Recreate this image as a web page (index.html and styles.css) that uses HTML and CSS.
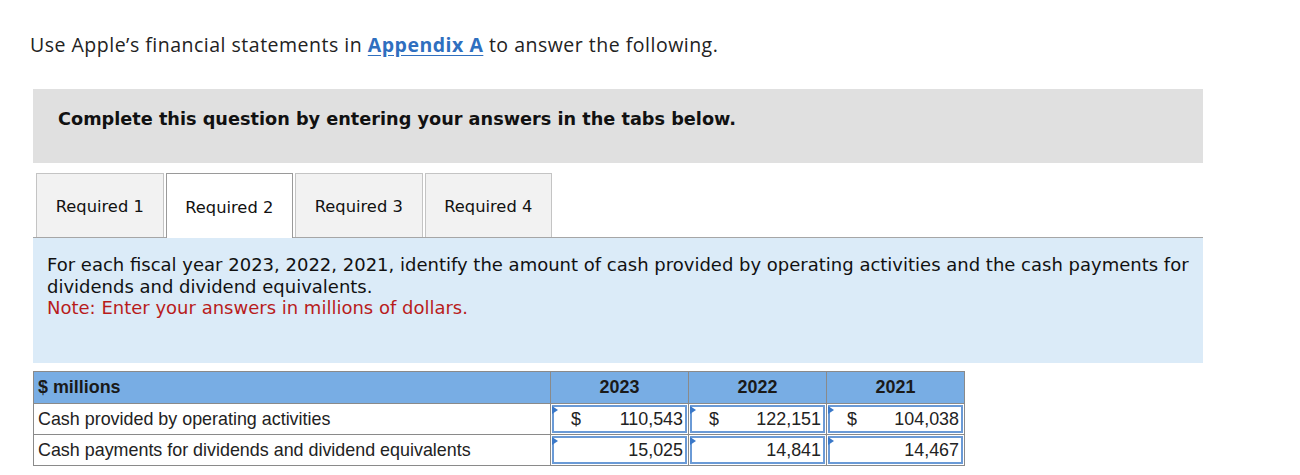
FILE: index.html
```html
<!DOCTYPE html>
<html>
<head>
<meta charset="utf-8">
<link rel="stylesheet" href="styles.css">
</head>
<body>
<div class="page">
  <p class="intro">Use Apple’s financial statements in <a class="link" href="#">Appendix A</a> to answer the following.</p>
  <div class="instruct">Complete this question by entering your answers in the tabs below.</div>
  <div class="tabs">
    <div class="tab">Required 1</div>
    <div class="tab active">Required 2</div>
    <div class="tab">Required 3</div>
    <div class="tab">Required 4</div>
  </div>
  <div class="panel">
    <p class="q">For each fiscal year 2023, 2022, 2021, identify the amount of cash provided by operating activities and the cash payments for dividends and dividend equivalents.</p>
    <p class="note">Note: Enter your answers in millions of dollars.</p>
  </div>
  <table class="grid">
    <thead>
      <tr>
        <th class="lab">$ millions</th>
        <th>2023</th>
        <th>2022</th>
        <th>2021</th>
      </tr>
    </thead>
    <tbody>
      <tr>
        <td class="lab">Cash provided by operating activities</td>
        <td class="in"><div class="box"><span class="cur">$</span><span class="num">110,543</span></div></td>
        <td class="in"><div class="box"><span class="cur">$</span><span class="num">122,151</span></div></td>
        <td class="in"><div class="box"><span class="cur">$</span><span class="num">104,038</span></div></td>
      </tr>
      <tr>
        <td class="lab">Cash payments for dividends and dividend equivalents</td>
        <td class="in"><div class="box"><span class="cur"></span><span class="num">15,025</span></div></td>
        <td class="in"><div class="box"><span class="cur"></span><span class="num">14,841</span></div></td>
        <td class="in"><div class="box"><span class="cur"></span><span class="num">14,467</span></div></td>
      </tr>
    </tbody>
  </table>
</div>
</body>
</html>
```
FILE: styles.css
```css
html, body {
  margin: 0;
  padding: 0;
  background: #fff;
}
.page {
  padding: 0 0 0 33px;
  width: 1170px;
}
.intro {
  margin: 0 0 0 -3px;
  padding: 33px 0 0 0;
  font-family: "Open Sans", sans-serif;
  font-size: 19.5px;
  letter-spacing: 0.5px;
  line-height: 24px;
  color: #222;
}
.link {
  color: #2f6fbf;
  font-weight: 700;
  text-decoration: underline;
  text-underline-offset: 3px;
}
.instruct {
  margin-top: 32px;
  height: 74px;
  background: #e0e0e0;
  box-sizing: border-box;
  padding: 19px 0 0 25px;
  font-family: "DejaVu Sans", Verdana, sans-serif;
  font-weight: 700;
  font-size: 17.7px;
  line-height: 22px;
  color: #111;
}
.tabs {
  display: flex;
  gap: 2px;
  margin-top: 10px;
  padding-left: 3px;
  height: 64px;
  position: relative;
  z-index: 1;
}
.tab {
  width: 127.5px;
  height: 64px;
  box-sizing: border-box;
  border: 1px solid #c4c4c4;
  border-bottom: none;
  background: #f2f2f2;
  display: flex;
  align-items: center;
  justify-content: center;
  font-family: "DejaVu Sans", Verdana, sans-serif;
  font-size: 16.3px;
  color: #111;
  padding-top: 2px;
}
.tab.active {
  background: #fff;
  border-color: #9a9a9a;
  height: 65px;
}
.panel {
  background: #dbebf8;
  border-top: 1px solid #a6a6a6;
  height: 125px;
  box-sizing: content-box;
  padding: 0 8px 0 14px;
  font-family: "DejaVu Sans", Verdana, sans-serif;
  font-size: 18px;
  line-height: 21.5px;
  color: #111;
}
.q {
  margin: 0;
  padding-top: 16px;
}
.note {
  margin: 0;
  color: #b81c1c;
}
.grid {
  margin-top: 8px;
  border-collapse: collapse;
  font-family: "Liberation Sans", Arial, sans-serif;
  font-size: 17.9px;
  color: #222;
}
.grid th, .grid td {
  border: 1px solid #8a8a8a;
  padding: 0;
}
.grid th {
  background: #78ade4;
  height: 31px;
  width: 137px;
  font-weight: 700;
  text-align: center;
  color: #1a1a1a;
}
.grid th.lab {
  width: 512px;
  text-align: left;
  padding-left: 4px;
}
.grid td.lab {
  height: 30px;
  padding-left: 4px;
}
.grid td.in {
  padding: 0;
  height: 30px;
  background: #fff;
}
.box {
  position: relative;
  margin: 1px;
  height: 24px;
  border: 2px solid #6a9ad6;
  display: flex;
  align-items: center;
  justify-content: space-between;
  padding: 0 2px 0 17px;
  background: #fff;
}
.box::before {
  content: "";
  position: absolute;
  left: -2px;
  top: -2px;
  border-top: 4px solid transparent;
  border-bottom: 4px solid transparent;
  border-left: 6px solid #3a78c8;
  transform: translateY(1px);
}
```
